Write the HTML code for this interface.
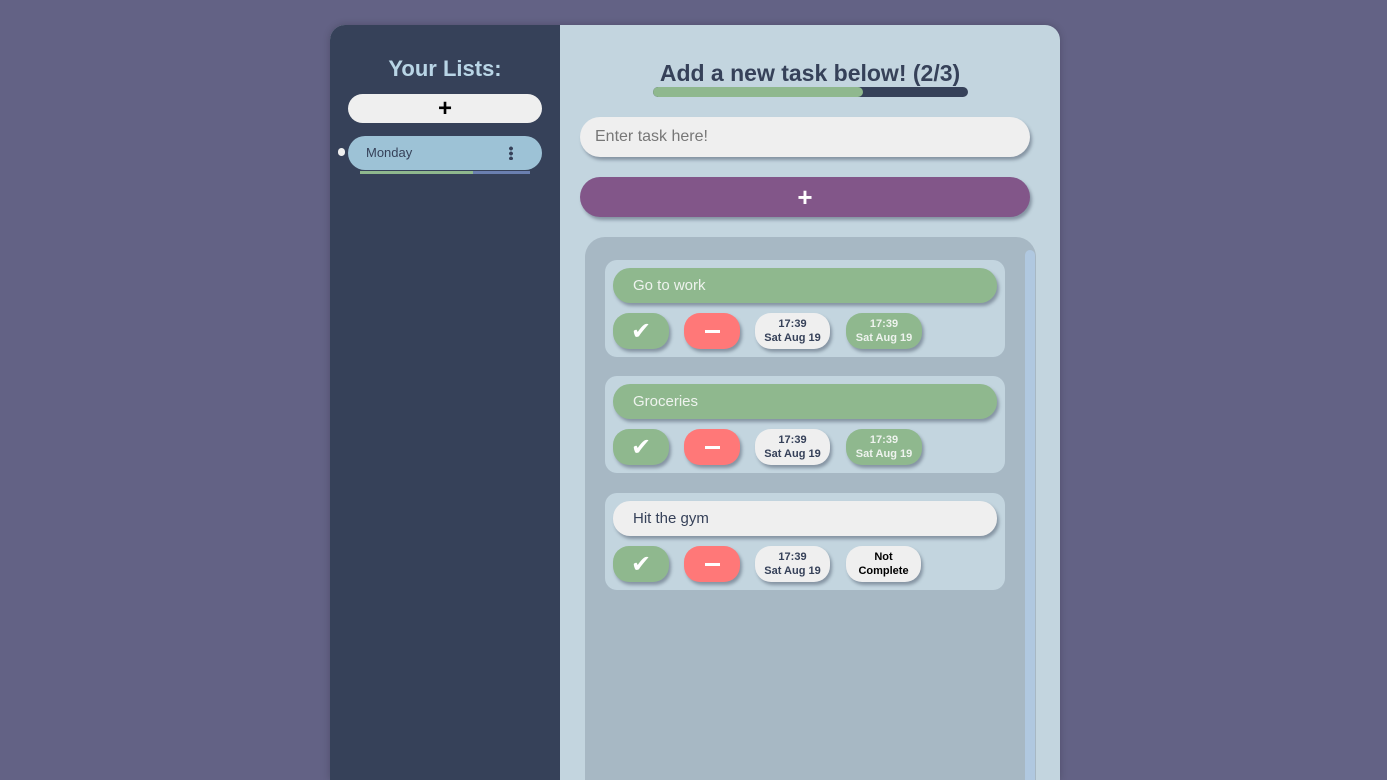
<!DOCTYPE html>
<html><head><style>
*{box-sizing:border-box;margin:0;padding:0}
html,body{width:1387px;height:780px;overflow:hidden}
body{background:#636285;position:relative;font-family:"Liberation Sans",sans-serif}
.wrap{position:absolute;left:330px;top:25px;width:730px;height:755px;border-radius:15px 15px 0 0;overflow:hidden;background:#c3d5df;box-shadow:0 0 8px rgba(0,0,0,.2)}
.side{position:absolute;left:0;top:0;width:230px;height:100%;background:#364159}
.abs{position:absolute}
.sh{box-shadow:2px 3px 3px rgba(60,70,90,.45)}
.btn{position:absolute;height:36px;border-radius:16px;display:flex;align-items:center;justify-content:center}
.g{background:#8fb88e}.r{background:#ff7878}.w{background:#efefef}
.dt{font-size:11px;font-weight:bold;line-height:14px;text-align:center;color:#364159}
.card{position:absolute;left:20px;width:400px;height:97px;background:#c3d5df;border-radius:12px}
.tt{position:absolute;left:8px;top:8px;width:384px;height:35px;border-radius:17px;font-size:15px;padding-left:20px;line-height:35px}
.ck{color:#fff;font-size:24px;font-family:"DejaVu Sans",sans-serif;font-weight:bold}
</style></head><body>
<div class="wrap">
 <div class="side">
  <div class="abs" style="left:0;width:230px;top:31px;text-align:center;color:#b9d5e6;font-weight:bold;font-size:22px">Your Lists:</div>
  <div class="abs" style="left:18px;top:69px;width:194px;height:29px;border-radius:15px;background:#efefef;text-align:center;font-size:24px;line-height:29px;font-weight:bold;color:#000">+</div>
  <div class="abs" style="left:8px;top:123px;width:7px;height:8px;border-radius:4px;background:#efefef"></div>
  <div class="abs" style="left:18px;top:111px;width:194px;height:34px;border-radius:17px;background:#9dc2d6;color:#364159;font-size:13px;line-height:34px;padding-left:18px">Monday
   <div class="abs" style="right:29px;top:10px;width:4px;height:14px;background:radial-gradient(circle,#364159 1.8px,transparent 2px) 0 0/4px 5px"></div></div>
  <div class="abs" style="left:30px;top:146px;width:170px;height:3px;background:#6b7fb0"><div style="width:113px;height:3px;background:#8fb88e"></div></div>
 </div>
 <div class="abs" style="left:230px;width:500px;top:35px;text-align:center;color:#364159;font-weight:bold;font-size:23px">Add a new task below! (2/3)</div>
 <div class="abs" style="left:323px;top:62px;width:315px;height:10px;border-radius:5px;background:#364159;overflow:hidden"><div style="width:210px;height:10px;border-radius:5px;background:#8fb88e"></div></div>
 <div class="abs sh" style="left:250px;top:92px;width:450px;height:40px;border-radius:20px;background:#efefef;font-size:16px;color:#777;line-height:40px;padding-left:15px">Enter task here!</div>
 <div class="abs sh" style="left:250px;top:152px;width:450px;height:40px;border-radius:20px;background:#825689;color:#fff;text-align:center;font-size:26px;font-weight:bold;line-height:40px">+</div>
 <div class="abs" style="left:255px;top:212px;width:451px;height:600px;border-radius:20px;background:#a7b8c4">
  <div class="abs" style="left:440px;top:13px;width:10px;height:600px;border-radius:5px;background:#b0c8e0"></div>
  <div class="card" style="top:23px"><div class="tt g sh" style="color:#eef3ee">Go to work</div>
   <div class="btn g sh ck" style="left:8px;top:53px;width:56px">✔</div>
   <div class="btn r sh" style="left:79px;top:53px;width:56px"><div style="width:15px;height:3px;background:#fff"></div></div>
   <div class="btn w sh dt" style="left:150px;top:53px;width:75px">17:39<br>Sat Aug 19</div>
   <div class="btn g sh dt" style="left:241px;top:53px;width:76px;color:#eef3ee">17:39<br>Sat Aug 19</div></div>
  <div class="card" style="top:139px"><div class="tt g sh" style="color:#eef3ee">Groceries</div>
   <div class="btn g sh ck" style="left:8px;top:53px;width:56px">✔</div>
   <div class="btn r sh" style="left:79px;top:53px;width:56px"><div style="width:15px;height:3px;background:#fff"></div></div>
   <div class="btn w sh dt" style="left:150px;top:53px;width:75px">17:39<br>Sat Aug 19</div>
   <div class="btn g sh dt" style="left:241px;top:53px;width:76px;color:#eef3ee">17:39<br>Sat Aug 19</div></div>
  <div class="card" style="top:256px"><div class="tt w sh" style="color:#364159">Hit the gym</div>
   <div class="btn g sh ck" style="left:8px;top:53px;width:56px">✔</div>
   <div class="btn r sh" style="left:79px;top:53px;width:56px"><div style="width:15px;height:3px;background:#fff"></div></div>
   <div class="btn w sh dt" style="left:150px;top:53px;width:75px">17:39<br>Sat Aug 19</div>
   <div class="btn w sh dt" style="left:241px;top:53px;width:75px;color:#000">Not<br>Complete</div></div>
 </div>
</div>
</body></html>
